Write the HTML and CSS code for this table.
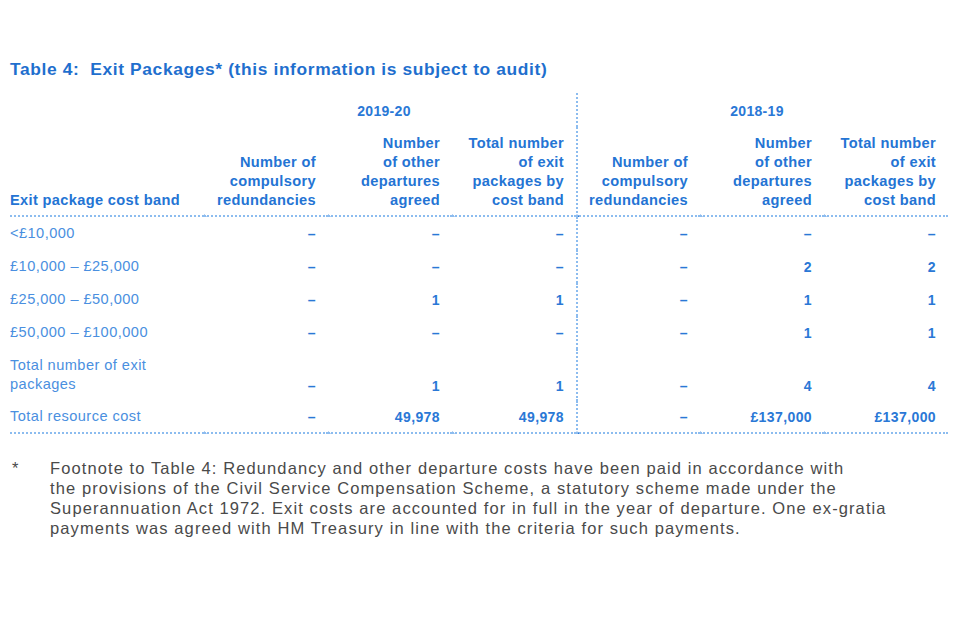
FILE: index.html
```html
<!DOCTYPE html>
<html lang="en">
<head>
<meta charset="utf-8">
<title>Table 4: Exit Packages</title>
<link rel="stylesheet" href="styles.css">
</head>
<body>
<div class="page">
  <h1 class="title">Table 4:&nbsp; Exit Packages* (this information is subject to audit)</h1>
  <table class="exit">
    <colgroup>
      <col class="c-band">
      <col class="c-num"><col class="c-num"><col class="c-num">
      <col class="c-num"><col class="c-num"><col class="c-num">
    </colgroup>
    <thead>
      <tr class="years">
        <th></th>
        <th colspan="3" class="year">2019-20</th>
        <th colspan="3" class="year split">2018-19</th>
      </tr>
      <tr class="heads">
        <th class="band">Exit package cost band</th>
        <th class="mark">Number of<br>compulsory<br>redundancies</th>
        <th class="mark">Number<br>of other<br>departures<br>agreed</th>
        <th class="mark">Total number<br>of exit<br>packages by<br>cost band</th>
        <th class="mark split">Number of<br>compulsory<br>redundancies</th>
        <th class="mark">Number<br>of other<br>departures<br>agreed</th>
        <th class="mark">Total number<br>of exit<br>packages by<br>cost band</th>
      </tr>
    </thead>
    <tbody>
      <tr>
        <td class="band">&lt;£10,000</td>
        <td>–</td><td>–</td><td>–</td>
        <td class="split">–</td><td>–</td><td>–</td>
      </tr>
      <tr>
        <td class="band">£10,000 – £25,000</td>
        <td>–</td><td>–</td><td>–</td>
        <td class="split">–</td><td>2</td><td>2</td>
      </tr>
      <tr>
        <td class="band">£25,000 – £50,000</td>
        <td>–</td><td>1</td><td>1</td>
        <td class="split">–</td><td>1</td><td>1</td>
      </tr>
      <tr>
        <td class="band">£50,000 – £100,000</td>
        <td>–</td><td>–</td><td>–</td>
        <td class="split">–</td><td>1</td><td>1</td>
      </tr>
      <tr class="tall">
        <td class="band">Total number of exit<br>packages</td>
        <td>–</td><td>1</td><td>1</td>
        <td class="split">–</td><td>4</td><td>4</td>
      </tr>
      <tr class="last">
        <td class="band">Total resource cost</td>
        <td class="mark">–</td><td class="mark">49,978</td><td class="mark">49,978</td>
        <td class="mark split">–</td><td class="mark">£137,000</td><td class="mark">£137,000</td>
      </tr>
    </tbody>
  </table>
  <div class="note">
    <span class="star">*</span>
    <p class="note-text">Footnote to Table 4: Redundancy and other departure costs have been paid in accordance with<br>the provisions of the Civil Service Compensation Scheme, a statutory scheme made under the<br>Superannuation Act 1972. Exit costs are accounted for in full in the year of departure. One ex-gratia<br>payments was agreed with HM Treasury in line with the criteria for such payments.</p>
  </div>
</div>
</body>
</html>
```

FILE: styles.css
```css
html, body {
  margin: 0;
  padding: 0;
  background: #ffffff;
}

.page {
  width: 960px;
  height: 640px;
  padding: 58px 0 0 10px;
  box-sizing: border-box;
  font-family: "Liberation Sans", Arial, sans-serif;
}

.title {
  margin: 0;
  font-size: 17.4px;
  line-height: 22px;
  font-weight: bold;
  color: #1f6fce;
  letter-spacing: 0.62px;
}

.exit {
  margin-top: 13px;
  border-collapse: separate;
  border-spacing: 0;
  table-layout: fixed;
  width: 938px;
}

.c-band { width: 194px; }
.c-num { width: 124px; }

.exit th,
.exit td {
  padding: 0 12px 0 0;
  text-align: right;
  box-sizing: border-box;
}

.years th {
  height: 34px;
  font-size: 14px;
  font-weight: bold;
  color: #2a78d6;
  vertical-align: middle;
  padding-top: 1px;
  letter-spacing: 0.3px;
}

.years th.year {
  text-align: center;
}

.heads th {
  height: 90px;
  font-size: 14.6px;
  line-height: 19px;
  font-weight: bold;
  color: #2474d4;
  letter-spacing: 0.35px;
  vertical-align: bottom;
  padding-bottom: 5px;
  border-bottom: 2px dotted #8cbcef;
  white-space: nowrap;
}

.heads th.band {
  text-align: left;
}

.split {
  border-left: 2px dotted #8cbcef;
}

.mark {
  background-image: radial-gradient(circle, #2c79d8 1.6px, rgba(44, 121, 216, 0) 2.2px);
  background-size: 5px 5px;
  background-repeat: no-repeat;
  background-origin: border-box;
  background-position: -2px calc(100% + 1.5px);
}

.mark.split {
  background-position: -1.5px calc(100% + 1.5px);
}

.exit tbody td {
  height: 33px;
  font-size: 14px;
  font-weight: bold;
  color: #2a78d6;
  vertical-align: middle;
  padding-top: 0;
  letter-spacing: 0.4px;
}

.exit tbody td.band {
  text-align: left;
  font-weight: normal;
  font-size: 14.6px;
  line-height: 19px;
  color: #4a8fe0;
  letter-spacing: 0.45px;
}

.exit tbody tr.tall td {
  height: 52px;
  vertical-align: bottom;
  padding-bottom: 7px;
  padding-top: 0;
}

.exit tbody tr.last td {
  height: 33px;
  border-bottom: 2px dotted #8cbcef;
}

.note {
  display: flex;
  margin-top: 24px;
  color: #4a4a4a;
  font-size: 16.5px;
  line-height: 20px;
}

.star {
  width: 38px;
  padding-left: 2px;
  flex: none;
}

.note-text {
  margin: 0;
  letter-spacing: 1.1px;
  white-space: nowrap;
}
```
